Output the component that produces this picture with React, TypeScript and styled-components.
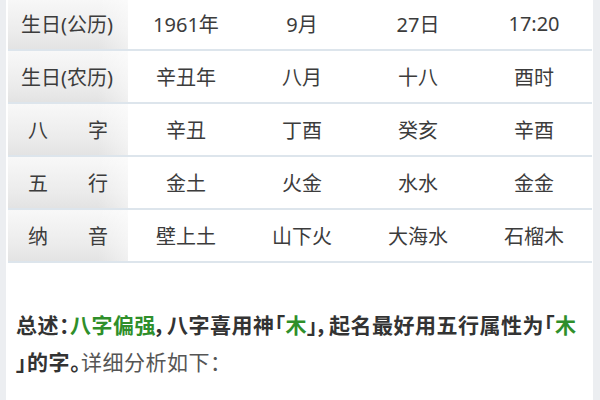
import React from "react";
import styled, { createGlobalStyle } from "styled-components";

const Global = createGlobalStyle`
  html, body { margin: 0; padding: 0; background: #eceef1; overflow: hidden; }
  body { font-family: "Noto Sans", "Noto Sans CJK SC", sans-serif; }
`;

const Page = styled.div`
  width: 600px;
  height: 400px;
  overflow: hidden;
  display: flex;
`;

const Panel = styled.div`
  margin-left: 6px;
  width: 587px;
  height: 400px;
  background: #ffffff;
  padding: 0 1px 0 2px;
  box-sizing: border-box;
`;

const Table = styled.div`
  margin-top: -2px;
  display: flex;
  flex-direction: column;
`;

const Row = styled.div`
  display: grid;
  grid-template-columns: 120px repeat(4, 1fr);
  height: 51px;
  border-bottom: 2px solid #dde5ec;
`;

const Label = styled.div<{ $spread?: boolean }>`
  display: flex;
  align-items: center;
  justify-content: ${(p) => (p.$spread ? "space-between" : "center")};
  padding: ${(p) => (p.$spread ? "0 20px" : "0 2px 0 0")};
  background: linear-gradient(to right, rgba(255, 255, 255, 0) 75%, rgba(255, 255, 255, 0.45)),
    linear-gradient(to bottom, #f8f8f8 0%, #ebebeb 70%, #e3e3e3 100%);
  color: #3c3c3c;
  font-size: 20px;
`;

const Cell = styled.div`
  display: flex;
  align-items: center;
  justify-content: center;
  color: #3c3c3c;
  font-size: 20px;
`;

const Summary = styled.p`
  margin: 43px 0 0;
  padding: 0 8px;
  font-family: "Noto Sans CJK SC", sans-serif;
  font-size: 21px;
  line-height: 37px;
  letter-spacing: 0.5px;
  font-feature-settings: "palt" 1;
  white-space: nowrap;
`;

const Strong = styled.span`
  font-weight: 700;
  color: #333333;
`;

const Green = styled.span`
  font-weight: 700;
  color: #2f8f2a;
`;

const Plain = styled.span`
  font-weight: 400;
  color: #555555;
`;

const rows: { label: string[]; cells: string[] }[] = [
  { label: ["生日(公历)"], cells: ["1961年", "9月", "27日", "17:20"] },
  { label: ["生日(农历)"], cells: ["辛丑年", "八月", "十八", "酉时"] },
  { label: ["八", "字"], cells: ["辛丑", "丁酉", "癸亥", "辛酉"] },
  { label: ["五", "行"], cells: ["金土", "火金", "水水", "金金"] },
  { label: ["纳", "音"], cells: ["壁上土", "山下火", "大海水", "石榴木"] },
];

export default function App() {
  return (
    <Page>
      <Global />
      <Panel>
        <Table>
          {rows.map((r, i) => (
            <Row key={i}>
              <Label $spread={r.label.length > 1}>
                {r.label.map((t, j) => (
                  <span key={j}>{t}</span>
                ))}
              </Label>
              {r.cells.map((c, j) => (
                <Cell key={j}>{c}</Cell>
              ))}
            </Row>
          ))}
        </Table>
        <Summary>
          <Strong>总述：</Strong>
          <Green>八字偏强</Green>
          <Strong>，八字喜用神「</Strong>
          <Green>木</Green>
          <Strong>」，起名最好用五行属性为「</Strong>
          <Green>木</Green>
          <br />
          <Strong>」的字。</Strong>
          <Plain>详细分析如下：</Plain>
        </Summary>
      </Panel>
    </Page>
  );
}
